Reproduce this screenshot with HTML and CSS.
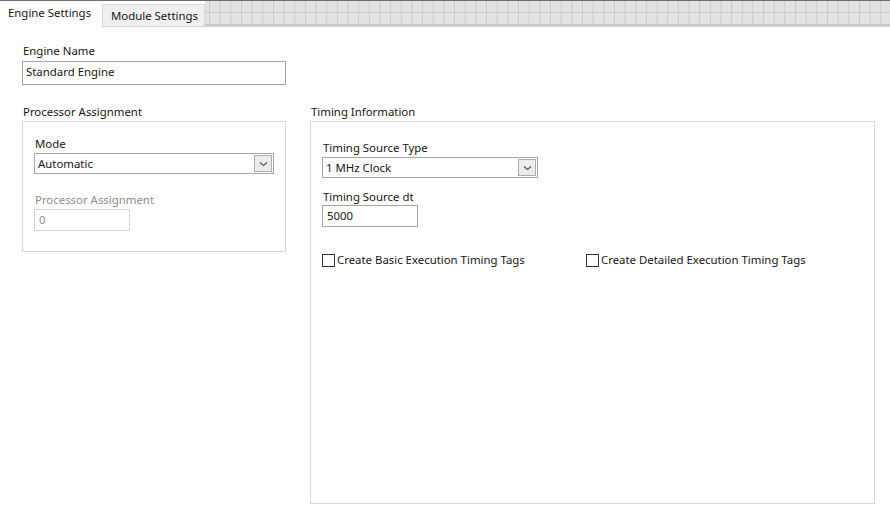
FILE: index.html
```html
<!DOCTYPE html>
<html>
<head>
<meta charset="utf-8">
<link rel="stylesheet" href="styles.css">
</head>
<body>
<div class="tabstrip">
  <div class="tab active">Engine Settings</div>
  <div class="tab">Module Settings</div>
  <div class="grid-fill"></div>
</div>
<div class="page">
  <div class="col left">
    <div class="field name-field">
      <div class="label">Engine Name</div>
      <div class="input wide">Standard Engine</div>
    </div>
    <div class="group-title">Processor Assignment</div>
    <div class="group left-group">
      <div class="label">Mode</div>
      <div class="select mode-select"><span>Automatic</span><span class="arrow"><svg width="9" height="6" viewBox="0 0 9 6"><path d="M1 1.5 L4.5 4.5 L8 1.5" fill="none" stroke="#555" stroke-width="1.1"/></svg></span></div>
      <div class="label disabled proc-label">Processor Assignment</div>
      <div class="input small disabled">0</div>
    </div>
  </div>
  <div class="col right">
    <div class="group-title">Timing Information</div>
    <div class="group right-group">
      <div class="label">Timing Source Type</div>
      <div class="select timing-select"><span>1 MHz Clock</span><span class="arrow"><svg width="9" height="6" viewBox="0 0 9 6"><path d="M1 1.5 L4.5 4.5 L8 1.5" fill="none" stroke="#555" stroke-width="1.1"/></svg></span></div>
      <div class="label dt-label">Timing Source dt</div>
      <div class="input small">5000</div>
      <div class="checks">
        <label class="check basic"><span class="box"></span>Create Basic Execution Timing Tags</label>
        <label class="check"><span class="box"></span>Create Detailed Execution Timing Tags</label>
      </div>
    </div>
  </div>
</div>
</body>
</html>
```

FILE: styles.css
```css
* { box-sizing: border-box; }
html, body {
  margin: 0;
  padding: 0;
  background: #ffffff;
}
body {
  width: 890px;
  height: 525px;
  overflow: hidden;
  font-family: "Noto Sans", "Open Sans", sans-serif;
  font-size: 11.4px;
  color: #161616;
}
.tabstrip {
  display: flex;
  height: 27px;
  border-top: 1px solid #6e6e6e;
  background: #ffffff;
}
.tab {
  line-height: 22px;
  white-space: nowrap;
}
.tab.active {
  width: 102px;
  padding-left: 8px;
  padding-top: 1px;
  background: #ffffff;
}
.tab:not(.active) {
  width: 103px;
  margin-top: 3px;
  height: 23px;
  padding-left: 8px;
  padding-top: 0;
  background: #f0f0f0;
  border: 1px solid #d9d9d9;
  border-bottom: 1px solid #d3d3d3;
}
.grid-fill {
  flex: 1;
  height: 26px;
  background-color: #e2e2e2;
  background-image:
    linear-gradient(to right, #cacaca 1px, transparent 1px),
    linear-gradient(to bottom, transparent 11px, #cacaca 11px, #cacaca 12px, transparent 12px);
  background-size: 10.667px 100%, 100% 12px;
  background-position: 4px 0, 0 0;
  border-bottom: 2px solid #d0d0d0;
}
.page {
  display: flex;
  padding-left: 22px;
}
.col.left { width: 264px; }
.col.right { width: 565px; margin-left: 24px; }
.label {
  line-height: 16px;
  height: 16px;
  padding-left: 1px;
}
.name-field { margin-top: 16px; }
.name-field .label { margin-bottom: 2px; }
.input {
  border: 1px solid #a5a5a5;
  height: 24px;
  line-height: 20px;
  padding-left: 3px;
  background: #fff;
}
.input.wide { width: 264px; }
.input.small { width: 96px; height: 22px; line-height: 19px; padding-left: 4px; }
.input.disabled { border-color: #d4d4d4; color: #8d8d8d; }
.label.disabled { color: #8d8d8d; }
.group-title {
  margin-top: 19px;
  line-height: 16px;
  height: 16px;
  padding-left: 1px;
}
.col.right .group-title { margin-top: 77px; }
.group {
  margin-top: 1px;
  border: 1px solid #d7d7d7;
}
.left-group {
  width: 264px;
  height: 131px;
  padding: 14px 0 0 11px;
}
.right-group {
  width: 565px;
  height: 383px;
  padding: 18px 0 0 11px;
}
.select {
  display: flex;
  align-items: center;
  justify-content: space-between;
  border: 1px solid #a5a5a5;
  height: 21px;
  padding-left: 3px;
  background: #fff;
}
.mode-select { width: 240px; margin-top: 1px; }
.timing-select { width: 216px; margin-top: 1px; }
.arrow {
  width: 18px;
  height: 17px;
  margin-right: 1px;
  border: 1px solid #adadad;
  background: #ebebeb;
  display: flex;
  align-items: center;
  justify-content: center;
}
.proc-label { margin-top: 18px; margin-bottom: 0; }
.input.small.disabled { margin-top: 1px; }
.dt-label { margin-top: 11px; margin-bottom: 0; }
.checks {
  display: flex;
  margin-top: 25px;
}
.check {
  display: flex;
  align-items: center;
  line-height: 16px;
  white-space: nowrap;
}
.check.basic { width: 264px; }
.box {
  width: 13px;
  height: 13px;
  border: 1px solid #333;
  margin-right: 2px;
  background: #fff;
}
```
